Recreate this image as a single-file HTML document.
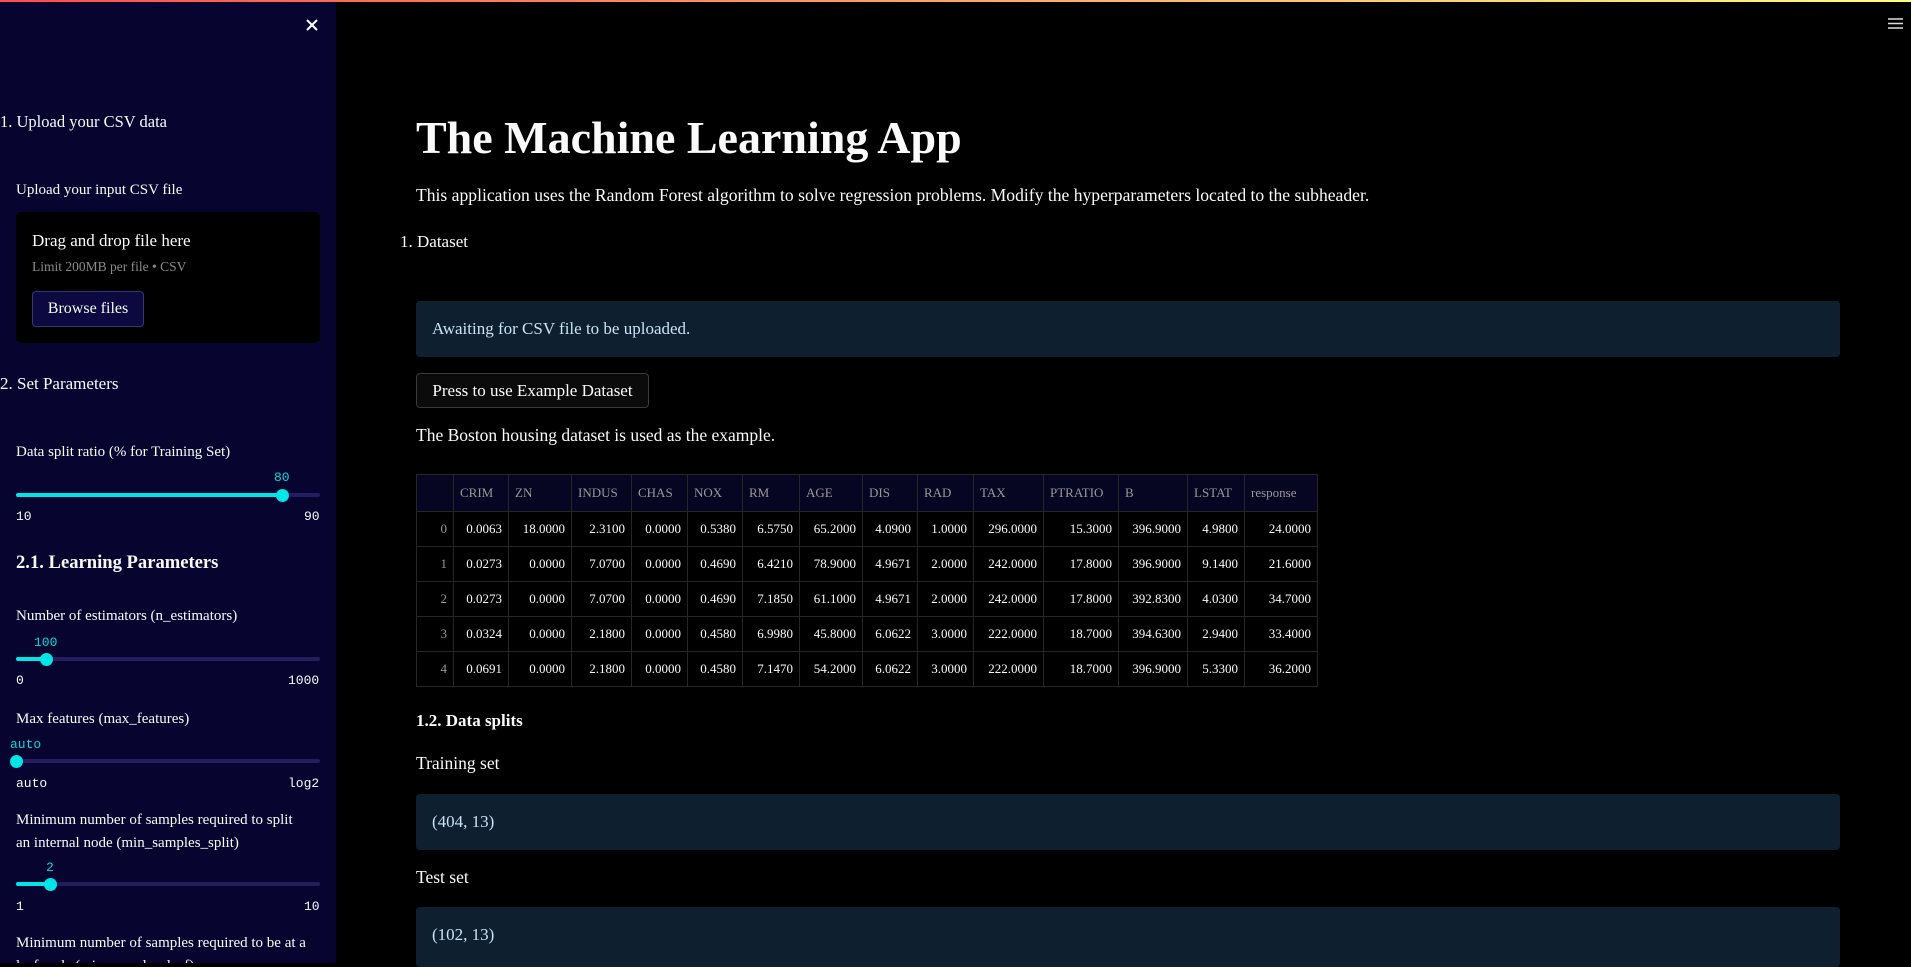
<!DOCTYPE html>
<html><head><meta charset="utf-8"><style>
*{margin:0;padding:0;box-sizing:border-box}
body{width:1911px;height:963px;overflow:hidden;background:#000;font-family:"Liberation Serif",serif;color:#fafafa;position:relative}
.a{position:absolute;white-space:nowrap}
#top{position:absolute;left:0;top:0;width:1911px;height:2px;background:linear-gradient(90deg,#ff4b4b,#fffd80)}
#sb{position:absolute;left:0;top:2px;width:336px;height:961px;background:#070530;overflow:hidden}
.lbl{font-size:15px}
.mono{font-family:"Liberation Mono",monospace;font-size:13px}
.track{position:absolute;left:16px;width:304px;height:4px;border-radius:2px;background:#241e5e}
.fill{position:absolute;left:0;top:0;height:4px;border-radius:2px;background:#00e5e5}
.thumb{position:absolute;width:13px;height:13px;border-radius:50%;background:#00e5e5;top:-4.5px}
.cy{color:#00dada}
.box{position:absolute;left:416px;width:1424px;background:#0e1f30;border-radius:4px;color:#c7e4f6;font-size:17px}
table{border-collapse:collapse;font-size:13px;position:absolute;left:416px;top:474px}
td,th{border:1px solid #262626;height:35px;padding:0 6px;font-weight:normal}
th{background:#060522;color:#999;height:37px;text-align:left}
td{text-align:right;color:#fafafa}
td.i{color:#999}
</style></head><body>
<div id="top"></div>
<div id="sb">
 <svg class="a" style="left:305px;top:16px" width="14" height="14" viewBox="0 0 14 14"><path d="M2 2L12 12M12 2L2 12" stroke="#fff" stroke-width="2"/></svg>
 <div class="a" style="left:0;top:110px;font-size:16.5px">1. Upload your CSV data</div>
 <div class="a lbl" style="left:16px;top:180px">Upload your input CSV file</div>
 <div class="a" style="left:16px;top:210px;width:304px;height:131px;background:#000;border-radius:5px"></div>
 <div class="a" style="left:32px;top:229px;font-size:17px">Drag and drop file here</div>
 <div class="a" style="left:32px;top:257px;font-size:13.5px;color:#8a8a8a">Limit 200MB per file • CSV</div>
 <div class="a" style="left:32px;top:289px;width:112px;height:36px;background:#0c0940;border:1px solid #3a3770;border-radius:4px;font-size:16px;text-align:center;line-height:34px">Browse files</div>
 <div class="a" style="left:0;top:372px;font-size:17px">2. Set Parameters</div>
 <div class="a lbl" style="left:16px;top:442px">Data split ratio (% for Training Set)</div>
 <div class="a mono cy" style="left:274px;top:468px">80</div>
 <div class="track" style="top:491px"><div class="fill" style="width:266px"></div><div class="thumb" style="left:260px"></div></div>
 <div class="a mono" style="left:16px;top:507px">10</div><div class="a mono" style="left:304px;top:507px">90</div>
 <div class="a" style="left:16px;top:550px;font-size:18.6px;font-weight:bold">2.1. Learning Parameters</div>
 <div class="a lbl" style="left:16px;top:606px">Number of estimators (n_estimators)</div>
 <div class="a mono cy" style="left:34px;top:633px">100</div>
 <div class="track" style="top:655px"><div class="fill" style="width:30px"></div><div class="thumb" style="left:24px"></div></div>
 <div class="a mono" style="left:16px;top:671px">0</div><div class="a mono" style="left:288px;top:671px">1000</div>
 <div class="a lbl" style="left:16px;top:709px">Max features (max_features)</div>
 <div class="a mono cy" style="left:10px;top:735px">auto</div>
 <div class="track" style="top:757px"><div class="thumb" style="left:-6px"></div></div>
 <div class="a mono" style="left:16px;top:774px">auto</div><div class="a mono" style="left:288px;top:774px">log2</div>
 <div class="a lbl" style="left:16px;top:810px">Minimum number of samples required to split</div>
 <div class="a lbl" style="left:16px;top:833px">an internal node (min_samples_split)</div>
 <div class="a mono cy" style="left:46px;top:858px">2</div>
 <div class="track" style="top:880px"><div class="fill" style="width:34px"></div><div class="thumb" style="left:28px"></div></div>
 <div class="a mono" style="left:16px;top:897px">1</div><div class="a mono" style="left:304px;top:897px">10</div>
 <div class="a lbl" style="left:16px;top:933px">Minimum number of samples required to be at a</div>
 <div class="a lbl" style="left:16px;top:956px">leaf node (min_samples_leaf)</div>
</div>
<svg class="a" style="left:1888px;top:18px" width="15" height="11" viewBox="0 0 15 11"><path d="M0 1H15M0 5.5H15M0 10H15" stroke="#ddd" stroke-width="1.6"/></svg>
<div class="a" style="left:416px;top:111px;font-size:46px;font-weight:bold">The Machine Learning App</div>
<div class="a" style="left:416px;top:185px;font-size:17.6px">This application uses the Random Forest algorithm to solve regression problems. Modify the hyperparameters located to the subheader.</div>
<div class="a" style="left:400px;top:232px;font-size:17px">1. Dataset</div>
<div class="box" style="top:301px;height:56px;padding:18px 16px">Awaiting for CSV file to be uploaded.</div>
<div class="a" style="left:416px;top:373px;width:233px;height:35px;background:#0b0b0b;border:1px solid #3a3a3a;border-radius:4px;font-size:17px;line-height:33px;text-align:center">Press to use Example Dataset</div>
<div class="a" style="left:416px;top:425px;font-size:17.5px">The Boston housing dataset is used as the example.</div>
<table>
<tr><th style="width:37px"></th><th style="width:55px">CRIM</th><th style="width:63px">ZN</th><th style="width:60px">INDUS</th><th style="width:56px">CHAS</th><th style="width:55px">NOX</th><th style="width:57px">RM</th><th style="width:63px">AGE</th><th style="width:55px">DIS</th><th style="width:56px">RAD</th><th style="width:70px">TAX</th><th style="width:75px">PTRATIO</th><th style="width:69px">B</th><th style="width:57px">LSTAT</th><th style="width:73px">response</th></tr>
<tr><td class="i">0</td><td>0.0063</td><td>18.0000</td><td>2.3100</td><td>0.0000</td><td>0.5380</td><td>6.5750</td><td>65.2000</td><td>4.0900</td><td>1.0000</td><td>296.0000</td><td>15.3000</td><td>396.9000</td><td>4.9800</td><td>24.0000</td></tr>
<tr><td class="i">1</td><td>0.0273</td><td>0.0000</td><td>7.0700</td><td>0.0000</td><td>0.4690</td><td>6.4210</td><td>78.9000</td><td>4.9671</td><td>2.0000</td><td>242.0000</td><td>17.8000</td><td>396.9000</td><td>9.1400</td><td>21.6000</td></tr>
<tr><td class="i">2</td><td>0.0273</td><td>0.0000</td><td>7.0700</td><td>0.0000</td><td>0.4690</td><td>7.1850</td><td>61.1000</td><td>4.9671</td><td>2.0000</td><td>242.0000</td><td>17.8000</td><td>392.8300</td><td>4.0300</td><td>34.7000</td></tr>
<tr><td class="i">3</td><td>0.0324</td><td>0.0000</td><td>2.1800</td><td>0.0000</td><td>0.4580</td><td>6.9980</td><td>45.8000</td><td>6.0622</td><td>3.0000</td><td>222.0000</td><td>18.7000</td><td>394.6300</td><td>2.9400</td><td>33.4000</td></tr>
<tr><td class="i">4</td><td>0.0691</td><td>0.0000</td><td>2.1800</td><td>0.0000</td><td>0.4580</td><td>7.1470</td><td>54.2000</td><td>6.0622</td><td>3.0000</td><td>222.0000</td><td>18.7000</td><td>396.9000</td><td>5.3300</td><td>36.2000</td></tr>
</table>
<div class="a" style="left:416px;top:711px;font-size:17px;font-weight:bold">1.2. Data splits</div>
<div class="a" style="left:416px;top:753px;font-size:17.5px">Training set</div>
<div class="box" style="top:794px;height:56px;padding:18px 16px">(404, 13)</div>
<div class="a" style="left:416px;top:867px;font-size:17.5px">Test set</div>
<div class="box" style="top:907px;height:60px;padding:18px 16px">(102, 13)</div>
</body></html>
